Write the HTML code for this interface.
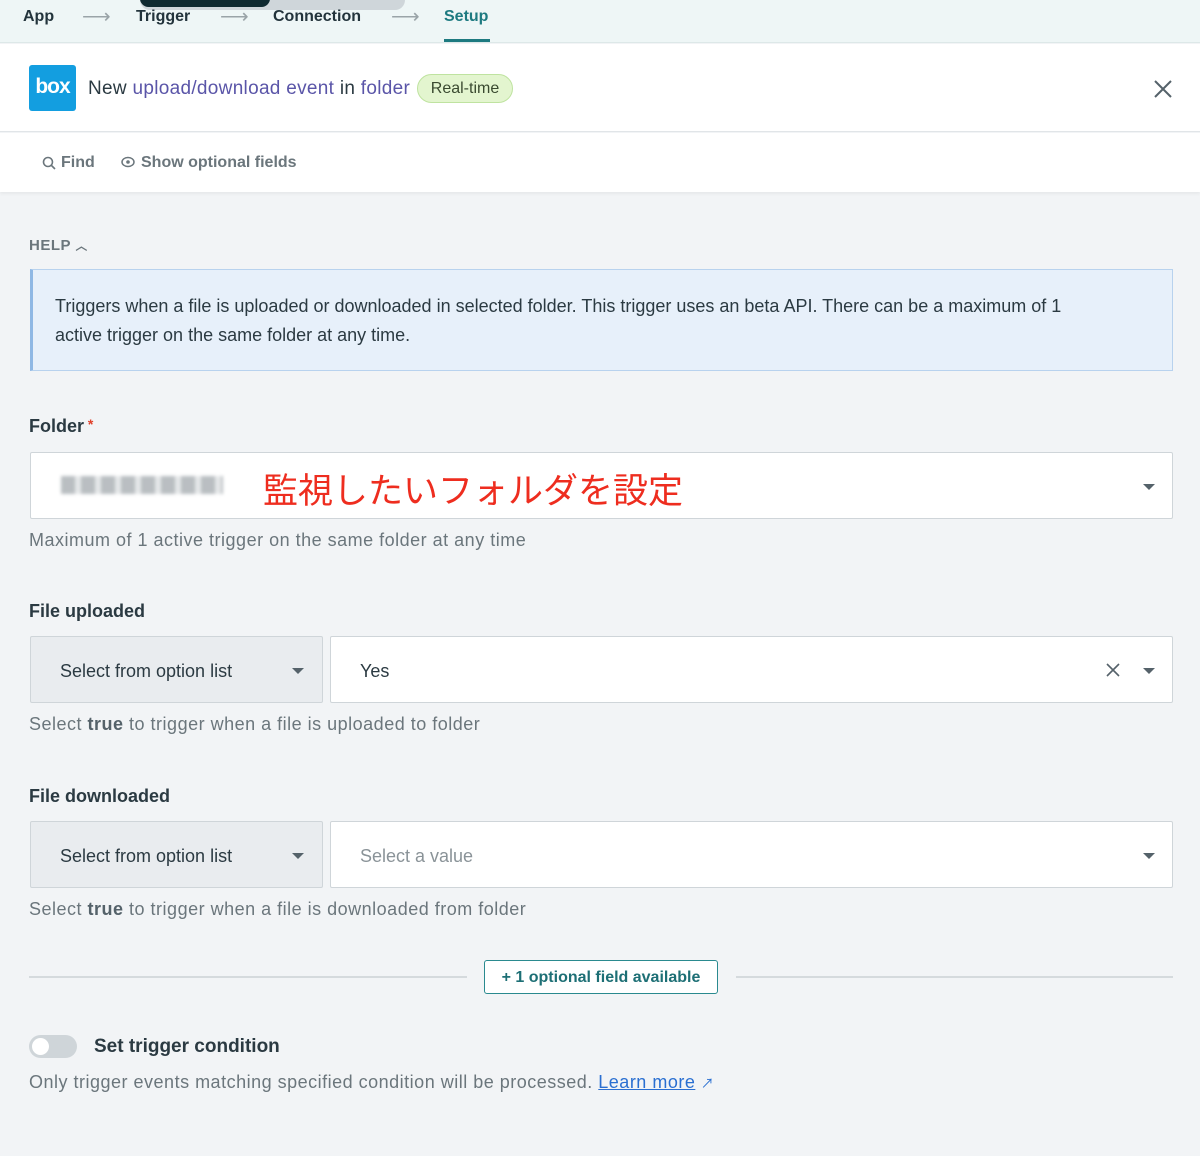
<!DOCTYPE html>
<html><head><meta charset="utf-8"><style>
*{box-sizing:border-box;margin:0;padding:0}
body{width:1200px;height:1156px;background:#f2f4f6;font-family:"Liberation Sans","Noto Sans CJK JP",sans-serif;color:#2b3a42;position:relative;overflow:hidden}
.abs{position:absolute}
.nav{left:0;top:0;width:1200px;height:43px;background:#eef6f6;border-bottom:1px solid #dde8e8}
.nav span{position:absolute;top:8px;font-size:16px;font-weight:bold;color:#23343c}
.arr{color:#9aa4a8!important;font-weight:normal!important;font-size:20px!important;top:4px!important}
.hdr{left:0;top:44px;width:1200px;height:88px;background:#fff;border-bottom:1px solid #e1e5e8}
.tb{left:0;top:133px;width:1200px;height:59px;background:#fff;box-shadow:0 2px 3px rgba(0,0,0,.05)}
.lbl{font-size:18px;font-weight:bold;color:#2b3a42}
.hint{font-size:18px;color:#6b767c;letter-spacing:.5px}
.inp{background:#fff;border:1px solid #cfd5d9;border-radius:2px}
.sel{background:#e9ecef;border:1px solid #cfd5d9;border-radius:2px;font-size:18px;color:#2b3a42}
.caret{width:0;height:0;border-left:6px solid transparent;border-right:6px solid transparent;border-top:6px solid #55626a}
</style></head><body>
<div class="abs nav">
 <div class="abs" style="left:140px;top:-10px;width:265px;height:20px;background:#cfd6da;border-radius:10px"></div>
 <div class="abs" style="left:140px;top:-10px;width:130px;height:17px;background:#0f2a30;border-radius:9px"></div>
 <span style="left:23px">App</span><span class="arr" style="left:82px">⟶</span>
 <span style="left:136px">Trigger</span><span class="arr" style="left:220px">⟶</span>
 <span style="left:273px">Connection</span><span class="arr" style="left:391px">⟶</span>
 <span style="left:444px;color:#1d7a80">Setup</span>
 <div class="abs" style="left:444px;top:39px;width:46px;height:3px;background:#1d7a80"></div>
</div>
<div class="abs hdr">
 <div class="abs" style="left:29px;top:21px;width:47px;height:46px;background:#139ee0;border-radius:3px;color:#fff;font-weight:bold;font-size:21px;text-align:center;line-height:44px;letter-spacing:-1px">box</div>
 <div class="abs" style="left:88px;top:34px;font-size:19px;color:#2b3a42;letter-spacing:.3px">New <span style="color:#5a55a8">upload/download event</span> in <span style="color:#5a55a8">folder</span></div>
 <div class="abs" style="left:417px;top:30px;width:96px;height:29px;background:#e3f5cf;border:1px solid #bfe3a0;border-radius:15px;font-size:16px;color:#3a4a30;text-align:center;line-height:27px">Real-time</div>
 <svg class="abs" style="left:1154px;top:36px" width="18" height="18"><path d="M1 1L17 17M17 1L1 17" stroke="#55626a" stroke-width="2"/></svg>
</div>
<div class="abs tb">
 <svg class="abs" style="left:42px;top:23px" width="14" height="14"><circle cx="6" cy="6" r="4.5" fill="none" stroke="#6b767c" stroke-width="1.6"/><path d="M9.5 9.5L13 13" stroke="#6b767c" stroke-width="1.6"/></svg>
 <div class="abs" style="left:61px;top:21px;font-size:16px;font-weight:bold;color:#6b767c">Find</div>
 <svg class="abs" style="left:121px;top:23px" width="14" height="12"><ellipse cx="7" cy="6" rx="6" ry="4.5" fill="none" stroke="#6b767c" stroke-width="1.5"/><circle cx="7" cy="6" r="1.8" fill="#6b767c"/></svg>
 <div class="abs" style="left:141px;top:21px;font-size:16px;font-weight:bold;color:#6b767c">Show optional fields</div>
</div>
<div class="abs" style="left:29px;top:237px;font-size:15px;font-weight:bold;color:#6b767c;letter-spacing:.5px">HELP <span style="font-size:12px">︿</span></div>
<div class="abs" style="left:30px;top:269px;width:1143px;height:102px;background:#e7f0fa;border:1px solid #b8d2ee;border-left:3px solid #8fb8e4;padding:22px 60px 21px 22px;font-size:18px;line-height:29px;color:#2b3a42">Triggers when a file is uploaded or downloaded in selected folder. This trigger uses an beta API. There can be a maximum of 1 active trigger on the same folder at any time.</div>
<div class="abs lbl" style="left:29px;top:416px">Folder<span style="color:#e0402a;font-size:14px;vertical-align:top"> *</span></div>
<div class="abs inp" style="left:30px;top:452px;width:1143px;height:67px">
 <div class="abs" style="left:30px;top:23px;width:162px;height:18px;background:repeating-linear-gradient(90deg,#a9afb3 0 14px,#dfe2e4 14px 20px);filter:blur(1.5px);opacity:.8"></div>
 <div class="abs" style="left:232px;top:14px;font-size:35px;color:#ee2d1f;font-family:'Noto Sans CJK JP',sans-serif;line-height:44px">監視したいフォルダを設定</div>
 <div class="abs caret" style="left:1112px;top:31px"></div>
</div>
<div class="abs hint" style="left:29px;top:530px">Maximum of 1 active trigger on the same folder at any time</div>
<div class="abs lbl" style="left:29px;top:601px">File uploaded</div>
<div class="abs sel" style="left:30px;top:636px;width:293px;height:67px;padding:24px 29px">Select from option list<div class="abs caret" style="left:261px;top:31px"></div></div>
<div class="abs inp" style="left:330px;top:636px;width:843px;height:67px;font-size:18px;padding:24px 29px">Yes
 <svg class="abs" style="left:775px;top:26px" width="14" height="14"><path d="M1 1L13 13M13 1L1 13" stroke="#55626a" stroke-width="1.6"/></svg>
 <div class="abs caret" style="left:812px;top:31px"></div></div>
<div class="abs hint" style="left:29px;top:714px">Select <b style="color:#55626a">true</b> to trigger when a file is uploaded to folder</div>
<div class="abs lbl" style="left:29px;top:786px">File downloaded</div>
<div class="abs sel" style="left:30px;top:821px;width:293px;height:67px;padding:24px 29px">Select from option list<div class="abs caret" style="left:261px;top:31px"></div></div>
<div class="abs inp" style="left:330px;top:821px;width:843px;height:67px;font-size:18px;padding:24px 29px;color:#8a9398">Select a value<div class="abs caret" style="left:812px;top:31px"></div></div>
<div class="abs hint" style="left:29px;top:899px">Select <b style="color:#55626a">true</b> to trigger when a file is downloaded from folder</div>
<div class="abs" style="left:29px;top:976px;width:438px;height:2px;background:#d5dadd"></div>
<div class="abs" style="left:736px;top:976px;width:437px;height:2px;background:#d5dadd"></div>
<div class="abs" style="left:484px;top:960px;width:234px;height:34px;background:#fff;border:1px solid #2a8a8f;border-radius:3px;font-size:16px;font-weight:bold;color:#1d6f75;text-align:center;line-height:33px">+ 1 optional field available</div>
<div class="abs" style="left:29px;top:1035px;width:48px;height:23px;background:#cfd5d9;border-radius:12px"><div class="abs" style="left:3px;top:3px;width:17px;height:17px;background:#fff;border-radius:50%"></div></div>
<div class="abs lbl" style="left:94px;top:1036px;font-size:19px">Set trigger condition</div>
<div class="abs hint" style="left:29px;top:1072px">Only trigger events matching specified condition will be processed. <span style="color:#2a6fd1;text-decoration:underline">Learn more</span> <span style="color:#2a6fd1;font-size:13px">↗</span></div>
</body></html>
